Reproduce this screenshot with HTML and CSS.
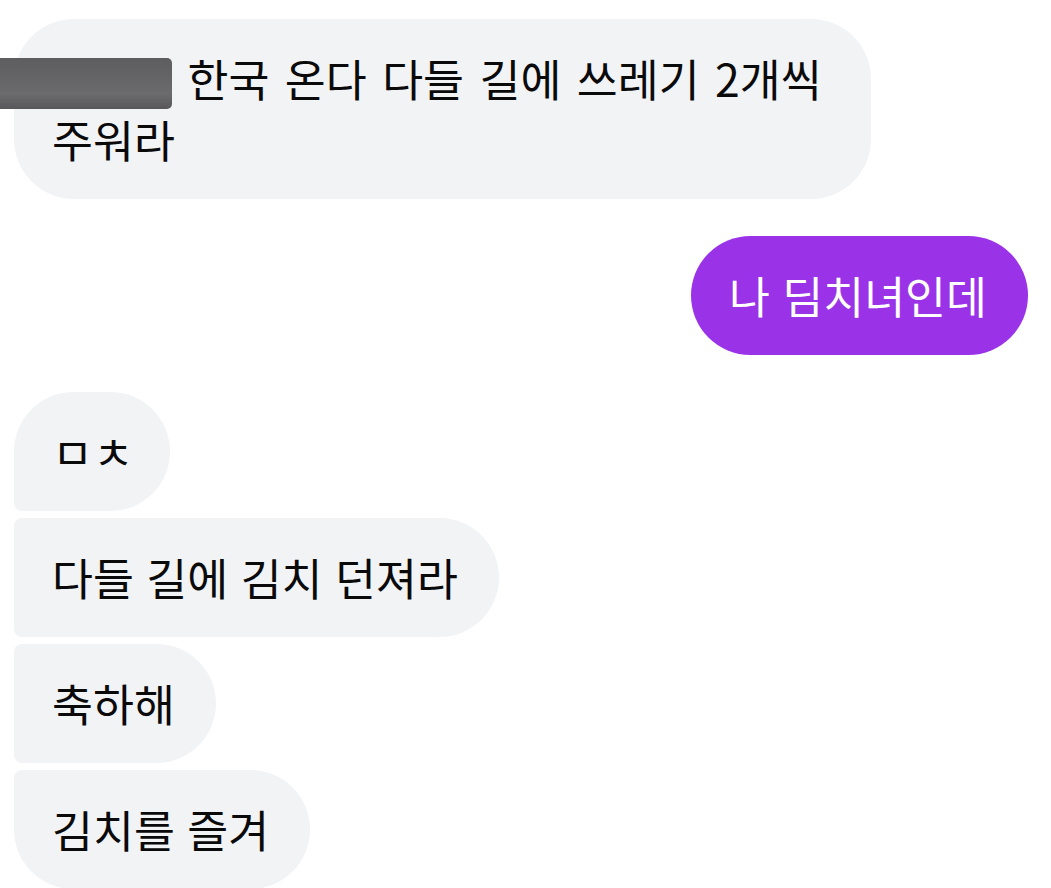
FILE: index.html
```html
<!DOCTYPE html>
<html lang="ko">
<head>
<meta charset="utf-8"/>
<meta content="width=device-width, initial-scale=1.0" name="viewport"/>
<title>Chat</title>
<link rel="stylesheet" href="styles.css">
</head>
<body>
<div class="thread">
  <div class="row row-in">
    <div class="bubble bubble-in solo wide"><span class="redacted"></span> 한국 온다 다들 길에 쓰레기 2개씩<br>주워라</div>
  </div>

  <div class="row row-out">
    <div class="bubble bubble-out solo">나 딤치녀인데</div>
  </div>

  <div class="group">
    <div class="row row-in">
      <div class="bubble bubble-in first jamo">ㅁㅊ</div>
    </div>
    <div class="row row-in">
      <div class="bubble bubble-in middle">다들 길에 김치 던져라</div>
    </div>
    <div class="row row-in">
      <div class="bubble bubble-in middle">축하해</div>
    </div>
    <div class="row row-in">
      <div class="bubble bubble-in last">김치를 즐겨</div>
    </div>
  </div>
</div>
</body>
</html>
```

FILE: styles.css
```css
body {
    margin: 0;
    background-color: #ffffff;
    font-family: "Noto Sans CJK KR", "Noto Sans", sans-serif;
    color: #0a0a0a;
}

.thread {
    display: flex;
    flex-direction: column;
    gap: 37px;
    padding: 19px 23px 0 14px;
}

.group {
    display: flex;
    flex-direction: column;
    gap: 7px;
}

.row {
    display: flex;
}

.row-in {
    justify-content: flex-start;
}

.row-out {
    justify-content: flex-end;
}

.bubble {
    font-size: 44.5px;
    line-height: 60px;
    padding: 29px 41px 30px 38px;
    white-space: nowrap;
}

.bubble-in {
    background-color: #f2f3f5;
}

.bubble-out {
    background-color: #9a33e8;
    color: #ffffff;
}

.wide {
    word-spacing: 3px;
    padding-right: 49px;
}

.jamo {
    padding-right: 36px;
}

.solo {
    border-radius: 60px;
}

.first {
    border-radius: 60px 60px 60px 8px;
}

.middle {
    border-radius: 8px 60px 60px 8px;
}

.last {
    border-radius: 8px 60px 60px 60px;
}

.redacted {
    display: inline-block;
    vertical-align: -12px;
    width: 172px;
    height: 51px;
    margin-left: -52px;
    border-radius: 0 5px 5px 0;
    background: linear-gradient(180deg, #5d5d60 0%, #6b6b6e 70%, #58585b 100%);
    filter: blur(0.6px);
}
```
